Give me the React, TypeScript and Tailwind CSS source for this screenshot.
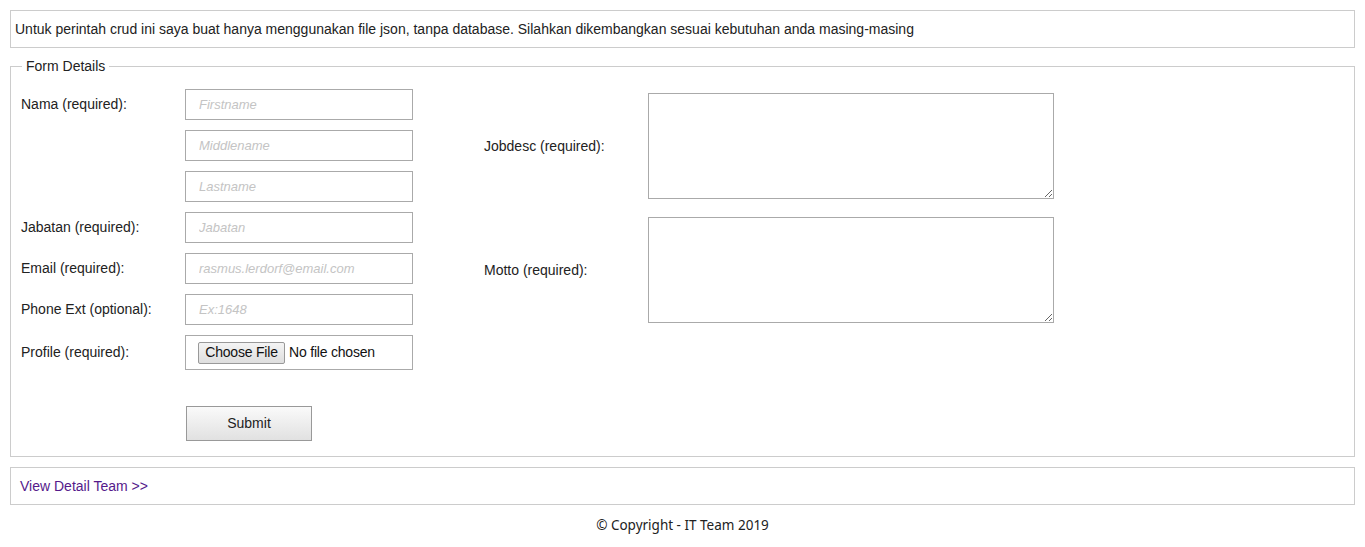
import React from 'react';

const leftRows = [
  { label: 'Nama (required):', placeholder: 'Firstname' },
  { label: '', placeholder: 'Middlename' },
  { label: '', placeholder: 'Lastname' },
  { label: 'Jabatan (required):', placeholder: 'Jabatan' },
  { label: 'Email (required):', placeholder: 'rasmus.lerdorf@email.com' },
  { label: 'Phone Ext (optional):', placeholder: 'Ex:1648' },
];

const App: React.FC = () => {
  return (
    <div className="min-h-screen bg-white px-[10px] pt-[10px] font-['Liberation_Sans',Arial,sans-serif] text-[14px] text-[#222]">
      {/* Info box */}
      <div className="flex h-[38px] items-center border border-[#ccc] px-[4px]">
        Untuk perintah crud ini saya buat hanya menggunakan file json, tanpa database. Silahkan dikembangkan sesuai kebutuhan anda masing-masing
      </div>

      {/* Form */}
      <fieldset className="mt-[10px] border border-[#ccc] px-[10px] pb-[15px] pt-[15px]">
        <legend className="ml-[1px] px-[4px] leading-[16px]">Form Details</legend>

        <div className="flex gap-[71px]">
          {/* Left column */}
          <div className="flex flex-col gap-[10px]">
            {leftRows.map((row, i) => (
              <div key={i} className="flex items-center">
                <div className="w-[164px]">{row.label}</div>
                <input
                  type="text"
                  placeholder={row.placeholder}
                  className="h-[31px] w-[228px] border border-[#aaa] px-[13px] text-[13px] outline-none placeholder:italic placeholder:text-[#c4c4c4]"
                />
              </div>
            ))}
            <div className="flex items-center">
              <div className="w-[164px]">Profile (required):</div>
              <div className="flex h-[35px] w-[228px] items-center border border-[#aaa] pl-[12px]">
                <span className="flex h-[22px] w-[87px] items-center justify-center rounded-[2px] border border-[#999] bg-gradient-to-b from-[#f4f4f4] to-[#dedede] text-[14px] tracking-[-0.2px] text-[#111]">
                  Choose File
                </span>
                <span className="ml-[4px] text-[14px] tracking-[-0.2px] text-[#111]">No file chosen</span>
              </div>
            </div>
            <div className="mt-[26px] flex">
              <div className="w-[165px]" />
              <button
                type="button"
                className="h-[35px] w-[126px] border border-[#999] bg-gradient-to-b from-[#fafafa] to-[#e1e1e1] text-[14px] text-[#222]"
              >
                Submit
              </button>
            </div>
          </div>

          {/* Right column */}
          <div className="flex flex-col gap-[18px] pt-[4px]">
            <div className="flex items-center">
              <div className="w-[164px]">Jobdesc (required):</div>
              <textarea className="h-[106px] w-[406px] resize border border-[#aaa] outline-none" />
            </div>
            <div className="flex items-center">
              <div className="w-[164px]">Motto (required):</div>
              <textarea className="h-[106px] w-[406px] resize border border-[#aaa] outline-none" />
            </div>
          </div>
        </div>
      </fieldset>

      {/* Link box */}
      <div className="mt-[10px] flex h-[38px] items-center border border-[#ccc] px-[9px]">
        <a href="#" className="text-[#551a8b]">View Detail Team &gt;&gt;</a>
      </div>

      <footer className="pt-[10px] text-center font-['Noto_Sans',sans-serif] text-[13.5px] text-[#222]">
        © Copyright - IT Team 2019
      </footer>
    </div>
  );
};

export default App;
